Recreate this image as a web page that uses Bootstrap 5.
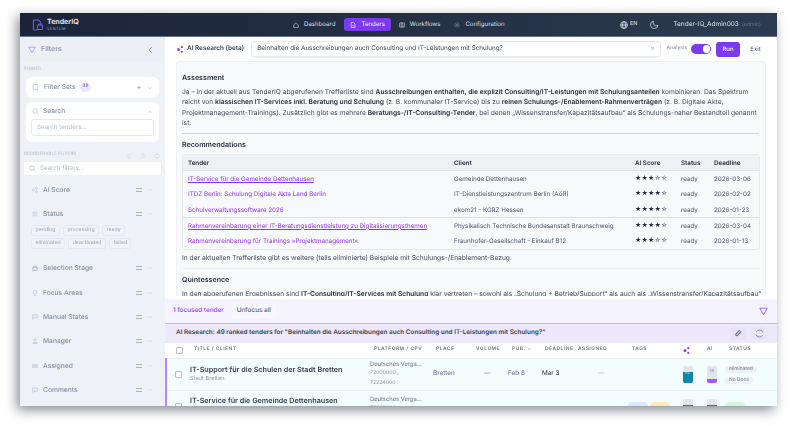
<!DOCTYPE html>
<html lang="de"><head><meta charset="utf-8"><title>TenderIQ</title>
<link href="https://cdn.jsdelivr.net/npm/bootstrap@5.3.0/dist/css/bootstrap.min.css" rel="stylesheet">
<style>
html,body{height:100%;overflow:hidden;background:#fff}
body{font-family:Inter,"Liberation Sans",sans-serif;font-size:6.66px;color:#334155;padding:13px 13px 20px 20px;text-rendering:geometricPrecision}
svg{display:block;flex:none}
.win{width:757px;height:393px;box-shadow:-3px 4px 11px rgba(15,23,42,.5);filter:blur(.35px);overflow:hidden;background:#fff}
.topnav{height:24px;background:linear-gradient(90deg,#1c2439,#2c3b4f);border-bottom:1px solid #64748b;color:#e2e8f0;padding:0 16px 0 12px}
.brand{width:32px}
.brand b{font-size:7.1px;font-weight:600;line-height:8px;display:block;color:#f1f5f9}
.brand i{font-size:3.8px;font-style:normal;letter-spacing:.4px;color:#94a3b8;display:block;line-height:5px}
.navit{font-size:6.1px;padding:0 6px;height:13px;border-radius:3px;gap:5px;color:#dbe2ea;white-space:nowrap}
.navit.on{background:#7c3aed;color:#fff;margin:0 2px 0 3px;gap:5px}
.navit.cfg{margin-left:2px}
.uname{font-size:6.5px;color:#dbe2ea}.uname span{color:#64748b;font-size:5.3px;margin-left:3px}
.bodyrow{height:369px}
.side{width:145px;background:#eef1f6;color:#8792a4;flex:none}
.sidehead{height:25px;padding:0 8px;background:#eceff4;color:#8390a2;font-size:7px;font-weight:500;gap:5px}
.pin{font-size:4.4px;color:#b3bbc8;letter-spacing:.2px;padding:5px 4px 0;height:15px}
.wcard{background:#fff;border-radius:6px;margin:0 6px;padding:0 6px;height:21px;font-size:6.6px;font-weight:500;gap:5px}
.wcard.tall{height:40px;margin-top:4px;display:block;padding:5px}
.cnt{background:#ede9fe;color:#8b5cf6;font-size:4.6px;border-radius:6px;padding:1px 3px;margin-left:-1px}
.finp{background:#fff;border:1px solid #e5e8ee;border-radius:3px;height:17px;margin-top:2px;padding:0 5px;color:#b4bcc9;font-size:6.2px;font-weight:400}
.rowhd{margin-top:7px;height:13px;padding:0 5px 0 4px;font-size:4.4px;color:#b3bbc8;letter-spacing:.15px}
.sfilt{background:#fff;height:13px;margin:0 4px;border-radius:2px;padding:0 5px;color:#b4bcc9;font-size:6.2px;gap:4px}
.fit{height:24.4px;padding:0 12px;font-size:6.7px;font-weight:500;gap:5px}
.fit .ml{margin-left:auto}
.fit.first{margin-top:2.500px}
.burger{width:6px;height:4px;border-top:1px solid #a9b3c1;border-bottom:1px solid #a9b3c1}
.chips{padding:0 11px;gap:2.5px 3px;flex-wrap:wrap;margin:-1.600px 0 6.400px;height:25px;align-content:flex-start}
.chipb{font-size:5.200px;color:#98a2b2;border:1px solid #e4e7ed;border-radius:3px;padding:0 3.5px;height:11px;line-height:9.500px;background:#f0f2f6}
.mainp{flex:1;min-width:0;background:#fff}
.aibar{height:24px;padding:0 11px 0 12px}
.ailabel{font-size:6.4px;font-weight:600;color:#334155;margin:0 7px 0 4px;white-space:nowrap}
.qbox{width:410px;height:16px;border:1px solid #e8eaf2;border-radius:3px;box-shadow:0 1px 1px #edf0f5;padding:0 5px;font-size:6.3px;color:#3b4658}
.anl{font-size:5.2px;color:#7b8798;margin:0 4px 0 6px}
.tgl{width:20px;height:9.500px;border-radius:5px;background:#7c3aed;padding:1px;margin-right:5px}
.tgl u{display:block;width:7.500px;height:7.500px;background:#fff;border-radius:50%;margin-left:auto}
.runb{background:#7c3aed;color:#fff;font-size:6px;font-weight:500;width:24px;height:15px;border-radius:3px}
.exitb{font-size:6px;color:#475569;margin-left:5px;width:21px;text-align:center}
.answer{height:235px;margin:0 11px;background:#f8f9fb;border:1px solid #eef0f4;border-bottom:0;border-radius:3px 3px 0 0;padding:10px 6px 0 5px;overflow:hidden;line-height:10.300px;color:#3f4a5a}
.answer h6{font-size:7.1px;font-weight:600;margin:0 0 3px;color:#1f2937;line-height:12px}
.answer b{font-weight:600;color:#1f2937}
.answer hr{margin:5px 0;border-color:#cfd4dc;opacity:1}
.answer hr.lite{border-color:#eff1f4}
.rtb{margin:0 0 3px;width:578px;border:1px solid #e7e9ee;border-radius:3px;overflow:hidden}
.rtb table{width:100%;table-layout:fixed;font-size:6.25px;margin:0;line-height:8px;--bs-table-bg:transparent}
.rtb th{background:#eff0f3;color:#1f2937;font-weight:600;height:15.500px;padding:0 5px;border-bottom:1px solid #e2e5ea;vertical-align:middle}
.rtb td{height:15.700px;padding:0 5px;white-space:nowrap;color:#475569;overflow:hidden;border:0;vertical-align:middle}
.rtb a{color:#9333ea}
.rtb .sep td{border-top:1px solid #dcdfe5}
.rtb td.st{color:#1f2937;font-size:6px;letter-spacing:.2px}.st s{text-decoration:none;color:#6b7280}
.focusbar{margin-top:3px;height:25px;background:#f5f3ff;border-bottom:1.500px solid #c4b5fd;padding:0 9px 0 8px}
.focusbar .ftxt{color:#8b43e8;font-size:6.4px;font-weight:500}
.unf{font-size:6.4px;margin-left:8px;padding:3px 5px;color:#556072;font-weight:500;background:#f8f7ff;border-radius:3px}
.resbar{height:18.500px;background:#ede9fb;padding:0 10px 0 11px;font-size:6.37px;font-weight:600;color:#374151;white-space:nowrap}
.icbx{width:16px;height:13px;border-radius:3px;background:#e8e4f8;margin-left:5px}
.rowclip{flex:1;min-height:0;overflow:hidden}
.ttab{width:612px;table-layout:fixed;font-size:6.4px;margin:0;border-collapse:collapse}
.ttab th{height:15.500px;padding:0;font-size:4.9px;letter-spacing:.5px;font-weight:600;color:#6b7686;text-align:left;background:#fff;border-bottom:1px solid #e8edf3;white-space:nowrap;vertical-align:middle}
.ttab td{height:32px;padding:0;background:#f4fdfe;color:#64748b;border-bottom:1px solid #e3f0f4;text-align:left;vertical-align:middle;white-space:nowrap}
.ttab td:first-child{border-left:2px solid #c084fc}
.ttab tr.pr2 td{vertical-align:top;padding-top:8px}
.ttab tr.pr2 td.plat{padding-top:4px}
.ttab tr.pr2 td.tit{padding-top:5px}
.ttab tr.pr2 td:first-child{padding-top:12px}
.ttab tr.pr2 td.tagc{padding-top:11.500px}
.ttab tr.pr2 td.low{padding-top:14px}
.ttab th.p4{padding-left:4px}.ttab th.p3{padding-left:3px}
.ttab td.dsh{padding-left:8px}
.cb{width:7px;height:7px;border:1px solid #b8bfca;border-radius:1px;background:#fff;margin-left:8px}
.ttab th:first-child .cb{margin-left:10px}
.ttab td.tit{font-size:7.200px;font-weight:600;color:#374151;line-height:10px}
.subt{font-size:5.600px;color:#8b95a5;line-height:9px;font-weight:400}
.ttab td.plat{font-size:5.800px;line-height:9.500px}.plat small{font-size:5.200px;display:block;color:#8b95a5}
.bar2{width:9.500px;height:17px;border-radius:2px;background:#e2e5ec;margin-left:2px;display:flex;flex-direction:column;justify-content:flex-end;overflow:hidden;position:relative}
.bar2 u{display:block}
.bar2 em{position:absolute;top:3px;left:0;right:0;text-align:center;font-style:normal;font-size:3.600px;line-height:5px;color:#7b8798}
.bar2 em.onc{top:5px;color:#d7eef4}
.pl{display:inline-block;font-size:4.900px;line-height:7.500px;padding:0 4px;border-radius:4px;background:#edf0f4;color:#6f7a8a}
.tg{display:inline-block;width:20px;height:8px;border-radius:4px;margin-right:2px;vertical-align:top}
</style></head><body>
<div class="win d-flex flex-column">
 <nav class="topnav d-flex align-items-center">
  <svg width="12" height="12" viewBox="0 0 13 13" fill="none" stroke="#7c5cf0" stroke-width="1.100"><path d="M6 12H3a1.500 1.500 0 0 1-1.500-1.500v-8A1.500 1.500 0 0 1 3 1h4l2.500 2.700V5"/><rect x="6" y="6.500" width="5.500" height="5" rx="1"/><path d="M7.500 6.500V5.500h2.500v1"/></svg>
  <div class="brand" style="margin-left:3px"><b>TenderIQ</b><i>VENTUM</i></div>
  <div class="d-flex align-items-center" style="margin-left:208px">
   <span class="navit d-flex align-items-center"><svg width="6" height="6" viewBox="0 0 8 8" fill="none" stroke="#dbe2ea" stroke-width=".8"><path d="M1 4 4 1l3 3v3.500H1z"/></svg>Dashboard</span>
   <span class="navit on d-flex align-items-center"><svg width="6" height="6" viewBox="0 0 8 8" fill="none" stroke="#fff" stroke-width=".8"><path d="M1.500.7h3.200l2 2v4.600h-5.200zM3 5h2.500"/></svg>Tenders</span>
   <span class="navit d-flex align-items-center"><svg width="6" height="6" viewBox="0 0 8 8" fill="none" stroke="#dbe2ea" stroke-width=".8"><rect x=".7" y="1.200" width="6.600" height="5.600" rx=".8"/><path d="M3 1.200v5.600M5 1.200v5.600"/></svg>Workflows</span>
   <span class="navit cfg d-flex align-items-center"><svg width="6" height="6" viewBox="0 0 8 8" fill="none" stroke="#9aa6b6" stroke-width=".8"><circle cx="4" cy="4" r="1.200"/><circle cx="4" cy="4" r="3" stroke-dasharray="1.200 .6"/></svg>Configuration</span>
  </div>
  <div class="d-flex align-items-center ms-auto">
   <svg width="8" height="8" viewBox="0 0 8 8" fill="none" stroke="#e2e8f0" stroke-width=".8"><circle cx="4" cy="4" r="3.400"/><ellipse cx="4" cy="4" rx="1.500" ry="3.400"/><path d="M.6 4h6.800"/></svg>
   <span style="font-size:5.400px;margin-left:2px">EN</span>
   <svg style="margin:0 14px 0 13px" width="9" height="9" viewBox="0 0 9 9" fill="none" stroke="#cbd5e1" stroke-width=".8"><path d="M3.500 1A3.800 3.800 0 1 0 8 5.500 3.300 3.300 0 0 1 3.500 1z"/></svg>
   <span class="uname">Tender-IQ_Admin003<span>(admin)</span></span>
  </div>
 </nav>
 <div class="bodyrow d-flex">
  <aside class="side">
   <div class="sidehead d-flex align-items-center">
    <svg width="8" height="8" viewBox="0 0 8 8" fill="none" stroke="#a78bfa" stroke-width=".8"><path d="M.7 1.200h6.600L4 6.800z"/></svg>
    <span>Filters</span>
    <svg class="ms-auto" style="margin-right:3px" width="7" height="8" viewBox="0 0 7 8" fill="none" stroke="#9aa5b4"><path d="M5 1 2 4l3 3"/></svg>
   </div>
   <div class="pin">PINNED</div>
   <div class="wcard d-flex align-items-center">
    <svg width="7" height="7" viewBox="0 0 7 7" fill="none" stroke="#b4bcc9" stroke-width=".7"><path d="M1.200.6h4.600v5.800L3.500 5l-2.300 1.400z"/></svg><span>Filter Sets</span><span class="cnt">39</span>
    <span class="ms-auto" style="font-size:9px;font-weight:300">+</span>
    <svg width="6" height="6" viewBox="0 0 6 6" fill="none" stroke="#cdd3dc" stroke-width=".6"><path d="m1 2 2 2 2-2"/></svg>
   </div>
   <div class="wcard tall">
    <div class="d-flex align-items-center" style="gap:4px"><svg style="margin-left:1px" width="7" height="7" viewBox="0 0 7 7" fill="none" stroke="#b4bcc9" stroke-width=".7"><circle cx="3" cy="3" r="2.200"/><path d="m4.700 4.700 1.600 1.600"/></svg>Search
    <svg class="ms-auto" style="margin-right:1px" width="6" height="6" viewBox="0 0 6 6" fill="none" stroke="#cdd3dc" stroke-width=".6"><path d="m1 4 2-2 2 2"/></svg></div>
    <div class="finp d-flex align-items-center">Search tenders...</div>
   </div>
   <div class="rowhd d-flex align-items-center"><span>REORDERABLE FILTERS</span>
    <svg class="ms-auto" width="6" height="6" viewBox="0 0 6 6" fill="none" stroke="#c3cad5" stroke-width=".6"><path d="m1 .8 2 2 2-2M1 3.200l2 2 2-2"/></svg>
    <svg class="ms-2" width="6" height="6" viewBox="0 0 6 6" fill="none" stroke="#c3cad5" stroke-width=".6"><path d="m1 2.800 2-2 2 2M1 5.200l2-2 2 2"/></svg>
    <svg class="ms-2" width="6" height="6" viewBox="0 0 6 6" fill="none" stroke="#c3cad5" stroke-width=".6"><path d="M5.300 2.500A2.400 2.400 0 0 0 1 2M.7 3.500A2.400 2.400 0 0 0 5 4"/></svg>
   </div>
   <div class="sfilt d-flex align-items-center"><svg width="7" height="7" viewBox="0 0 7 7" fill="none" stroke="#b4bcc9" stroke-width=".7"><circle cx="3" cy="3" r="2.200"/><path d="m4.700 4.700 1.600 1.600"/></svg>Search filters...</div>
   <div class="fit first d-flex align-items-center"><svg width="6" height="6" viewBox="0 0 6 6" fill="none" stroke="#b4bcc9" stroke-width=".6"><circle cx="1.500" cy="3" r="1"/><circle cx="4.500" cy="1.300" r=".8"/><circle cx="4.500" cy="4.700" r=".8"/></svg>AI Score<span class="burger ml"></span><svg width="6" height="6" viewBox="0 0 6 6" fill="none" stroke="#cdd3dc" stroke-width=".6"><path d="m1 2 2 2 2-2"/></svg></div>
   <div class="fit d-flex align-items-center"><svg width="6" height="6" viewBox="0 0 6 6" fill="none" stroke="#b4bcc9" stroke-width=".6"><path d="M.5 1.300h5M.5 3h5M.5 4.700h5"/></svg>Status<span class="burger ml"></span><svg width="6" height="6" viewBox="0 0 6 6" fill="none" stroke="#cdd3dc" stroke-width=".6"><path d="m1 4 2-2 2 2"/></svg></div>
   <div class="chips d-flex"><span class="chipb">pending</span><span class="chipb">processing</span><span class="chipb">ready</span><span class="chipb">eliminated</span><span class="chipb">deactivated</span><span class="chipb">failed</span></div>
   <div class="fit d-flex align-items-center"><svg width="6" height="6" viewBox="0 0 6 6" fill="none" stroke="#a9b3c1" stroke-width=".8"><path d="M.7 5.300V2.500h4.600v2.800zM1.700 2.500V1h2.600v1.500"/></svg>Selection Stage<span class="burger ml"></span><svg width="6" height="6" viewBox="0 0 6 6" fill="none" stroke="#cdd3dc" stroke-width=".6"><path d="m1 2 2 2 2-2"/></svg></div>
   <div class="fit d-flex align-items-center"><svg width="6" height="6" viewBox="0 0 6 6" fill="none" stroke="#b4bcc9" stroke-width=".6"><circle cx="3" cy="2.300" r="1.800"/><path d="M2.200 5.500h1.600"/></svg>Focus Areas<span class="burger ml"></span><svg width="6" height="6" viewBox="0 0 6 6" fill="none" stroke="#cdd3dc" stroke-width=".6"><path d="m1 2 2 2 2-2"/></svg></div>
   <div class="fit d-flex align-items-center"><svg width="6" height="6" viewBox="0 0 6 6" fill="none" stroke="#b4bcc9" stroke-width=".6"><path d="M.7 5.700V.8h4.600v3H.7"/></svg>Manual States<span class="burger ml"></span><svg width="6" height="6" viewBox="0 0 6 6" fill="none" stroke="#cdd3dc" stroke-width=".6"><path d="m1 2 2 2 2-2"/></svg></div>
   <div class="fit d-flex align-items-center"><svg width="6" height="6" viewBox="0 0 6 6" fill="none" stroke="#b4bcc9" stroke-width=".6"><circle cx="3" cy="1.800" r="1.200"/><path d="M1 5.500V4.500h4v1z"/></svg>Manager<span class="burger ml"></span><svg width="6" height="6" viewBox="0 0 6 6" fill="none" stroke="#cdd3dc" stroke-width=".6"><path d="m1 2 2 2 2-2"/></svg></div>
   <div class="fit d-flex align-items-center"><svg width="6" height="6" viewBox="0 0 6 6" fill="#d2d7df"><rect y="1" width="6" height="4" rx=".5"/></svg>Assigned<span class="burger ml"></span><svg width="6" height="6" viewBox="0 0 6 6" fill="none" stroke="#cdd3dc" stroke-width=".6"><path d="m1 2 2 2 2-2"/></svg></div>
   <div class="fit d-flex align-items-center"><svg width="6" height="6" viewBox="0 0 6 6" fill="none" stroke="#b4bcc9" stroke-width=".6"><path d="M.6 1h4.800v3.200H2L1 5.300V4.200H.6z"/></svg>Comments<span class="burger ml"></span><svg width="6" height="6" viewBox="0 0 6 6" fill="none" stroke="#cdd3dc" stroke-width=".6"><path d="m1 2 2 2 2-2"/></svg></div>
  </aside>
  <main class="mainp d-flex flex-column">
   <div class="aibar d-flex align-items-center">
    <svg width="6" height="7" viewBox="0 0 6 7" fill="#8b3bf0"><circle cx="1.500" cy="3.500" r="1.500"/><circle cx="4.800" cy="1.200" r="1.100"/><circle cx="4.800" cy="5.800" r="1.100"/></svg>
    <span class="ailabel">AI Research (beta)</span>
    <div class="qbox d-flex align-items-center justify-content-between"><span>Beinhalten die Ausschreibungen auch Consulting und IT-Leistungen mit Schulung?</span><span style="color:#a3adbb">×</span></div>
    <span class="anl">Analysis</span><span class="tgl d-block"><u></u></span>
    <span class="runb d-flex align-items-center justify-content-center">Run</span><span class="exitb">Exit</span>
   </div>
   <div class="answer">
    <h6>Assessment</h6>
    <div class="text-nowrap">Ja – in der aktuell aus TenderIQ abgerufenen Trefferliste sind <b>Ausschreibungen enthalten, die explizit Consulting/IT-Leistungen mit Schulungsanteilen</b> kombinieren. Das Spektrum<br>reicht von <b>klassischen IT-Services inkl. Beratung und Schulung</b> (z. B. kommunaler IT-Service) bis zu <b>reinen Schulungs-/Enablement-Rahmenverträgen</b> (z. B. Digitale Akte,<br>Projektmanagement-Trainings). Zusätzlich gibt es mehrere <b>Beratungs-/IT-Consulting-Tender</b>, bei denen „Wissenstransfer/Kapazitätsaufbau“ als Schulungs-naher Bestandteil genannt<br>ist.</div>
    <hr>
    <h6>Recommendations</h6>
    <div class="rtb"><table class="table table-sm"><colgroup><col style="width:266px"><col style="width:181px"><col style="width:46px"><col style="width:33px"><col></colgroup>
     <thead><tr><th>Tender</th><th>Client</th><th>AI Score</th><th>Status</th><th>Deadline</th></tr></thead>
     <tbody>
     <tr><td><a href="#">IT-Service für die Gemeinde Dettenhausen</a></td><td>Gemeinde Dettenhausen</td><td class="st">★★★<s>☆☆</s></td><td>ready</td><td>2026-03-06</td></tr>
     <tr><td><a href="#" class="text-decoration-none">ITDZ Berlin: Schulung Digitale Akte Land Berlin</a></td><td>IT-Dienstleistungszentrum Berlin (AöR)</td><td class="st">★★★★<s>☆</s></td><td>ready</td><td>2026-02-02</td></tr>
     <tr><td><a href="#" class="text-decoration-none">Schulverwaltungssoftware 2026</a></td><td>ekom21 - KGRZ Hessen</td><td class="st">★★★★<s>☆</s></td><td>ready</td><td>2026-01-23</td></tr>
     <tr class="sep"><td><a href="#">Rahmenvereinbarung einer IT-Beratungsdienstleistung zu Digitalisierungsthemen</a></td><td>Physikalisch Technische Bundesanstalt Braunschweig</td><td class="st">★★★★<s>☆</s></td><td>ready</td><td>2026-03-04</td></tr>
     <tr><td><a href="#" class="text-decoration-none">Rahmenvereinbarung für Trainings »Projektmanagement«</a></td><td>Fraunhofer-Gesellschaft - Einkauf B12</td><td class="st">★★★<s>☆☆</s></td><td>ready</td><td>2026-01-13</td></tr>
     </tbody></table></div>
    <div>In der aktuellen Trefferliste gibt es weitere (teils eliminierte) Beispiele mit Schulungs-/Enablement-Bezug.</div>
    <hr class="lite">
    <h6>Quintessence</h6>
    <div class="text-nowrap">In den abgerufenen Ergebnissen sind <b>IT-Consulting/IT-Services mit Schulung</b> klar vertreten – sowohl als „Schulung + Betrieb/Support“ als auch als „Wissenstransfer/Kapazitätsaufbau“</div>
   </div>
   <div class="focusbar d-flex align-items-center"><span class="ftxt">1 focused tender</span><span class="unf">Unfocus all</span>
    <svg class="ms-auto" width="9" height="9" viewBox="0 0 9 9" fill="none" stroke="#8b5cf6" stroke-width=".9"><path d="M.8 1.200h7.400L4.500 7.800z"/></svg></div>
   <div class="resbar d-flex align-items-center"><span>AI Research: 49 ranked tenders for "Beinhalten die Ausschreibungen auch Consulting und IT-Leistungen mit Schulung?"</span>
    <span class="icbx ms-auto d-flex align-items-center justify-content-center"><svg width="9" height="9" viewBox="0 0 8 8" fill="none" stroke="#6b7280"><path d="M6.500 2 3 5.800a.9.900 0 0 1-1.300-1.200L5 1"/></svg></span>
    <span class="icbx d-flex align-items-center justify-content-center"><svg width="9" height="9" viewBox="0 0 8 8" fill="none" stroke="#6b7280" stroke-width=".7"><path d="M7 3a3.200 3.200 0 0 0-5.800-.5M1 5a3.200 3.200 0 0 0 5.800.5"/></svg></span></div>
   <div class="rowclip">
   <table class="ttab"><colgroup><col style="width:24px"><col style="width:180px"><col style="width:63px"><col style="width:43px"><col style="width:32px"><col style="width:34px"><col style="width:36px"><col style="width:48px"><col style="width:55px"><col style="width:24px"><col style="width:20px"><col></colgroup>
    <thead><tr><th><div class="cb"></div></th><th class="p4">TITLE / CLIENT</th><th class="p4">PLATFORM / CPV</th><th class="p3">PLACE</th><th>VOLUME</th><th class="p4">PUB. <span style="color:#a78bfa">⌄</span></th><th class="p3">DEADLINE</th><th>ASSIGNED</th><th style="padding-left:6px">TAGS</th><th style="padding-left:2px"><svg width="7" height="7" viewBox="0 0 6 7" fill="#8b3bf0"><circle cx="1.500" cy="3.500" r="1.500"/><circle cx="4.800" cy="1.200" r="1.100"/><circle cx="4.800" cy="5.800" r="1.100"/></svg></th><th style="padding-left:2px">AI</th><th style="padding-left:4px">STATUS</th></tr></thead>
    <tbody>
    <tr><td><div class="cb"></div></td><td class="tit">IT-Support für die Schulen der Stadt Bretten<div class="subt">Stadt Bretten</div></td><td class="plat">Deutsches Verga...<small>72000000 ,</small><small>72224000</small></td><td>Bretten</td><td class="dsh">—</td><td>Feb 8</td><td style="color:#1f2937">Mar 3</td><td class="dsh" style="color:#a3adbb;padding-left:20px">—</td><td></td><td><div class="bar2"><em class="onc">62</em><u style="height:11px;background:#0b86a8"></u></div></td><td><div class="bar2"><em>29</em><u style="height:4px;background:#a855f7"></u></div></td><td><span class="pl">eliminated</span><br><span class="pl" style="margin-top:3px">No Docs</span></td></tr>
    <tr class="pr2"><td><div class="cb"></div></td><td class="tit">IT-Service für die Gemeinde Dettenhausen<div class="subt">Gemeinde Dettenhausen</div></td><td class="plat">Deutsches Verga...<small>72000000</small></td><td class="low">Dettenhausen</td><td class="dsh low">—</td><td class="low">Feb 4</td><td class="low" style="color:#1f2937">Mar 6</td><td></td><td class="tagc" style="padding-left:2px"><span class="tg" style="background:#dbeafe"></span><span class="tg" style="background:#fde9b8"></span></td><td><div class="bar2"><u style="height:11px;background:#0b86a8"></u></div></td><td><div class="bar2"><u style="height:11px;background:#7c3aed"></u></div></td><td class="tagc"><span class="tg" style="background:#d1f5e0"></span></td></tr>
    </tbody></table></div>
  </main>
 </div>
</div>
<script src="https://cdn.jsdelivr.net/npm/bootstrap@5.3.0/dist/js/bootstrap.bundle.min.js"></script>
</body></html>
